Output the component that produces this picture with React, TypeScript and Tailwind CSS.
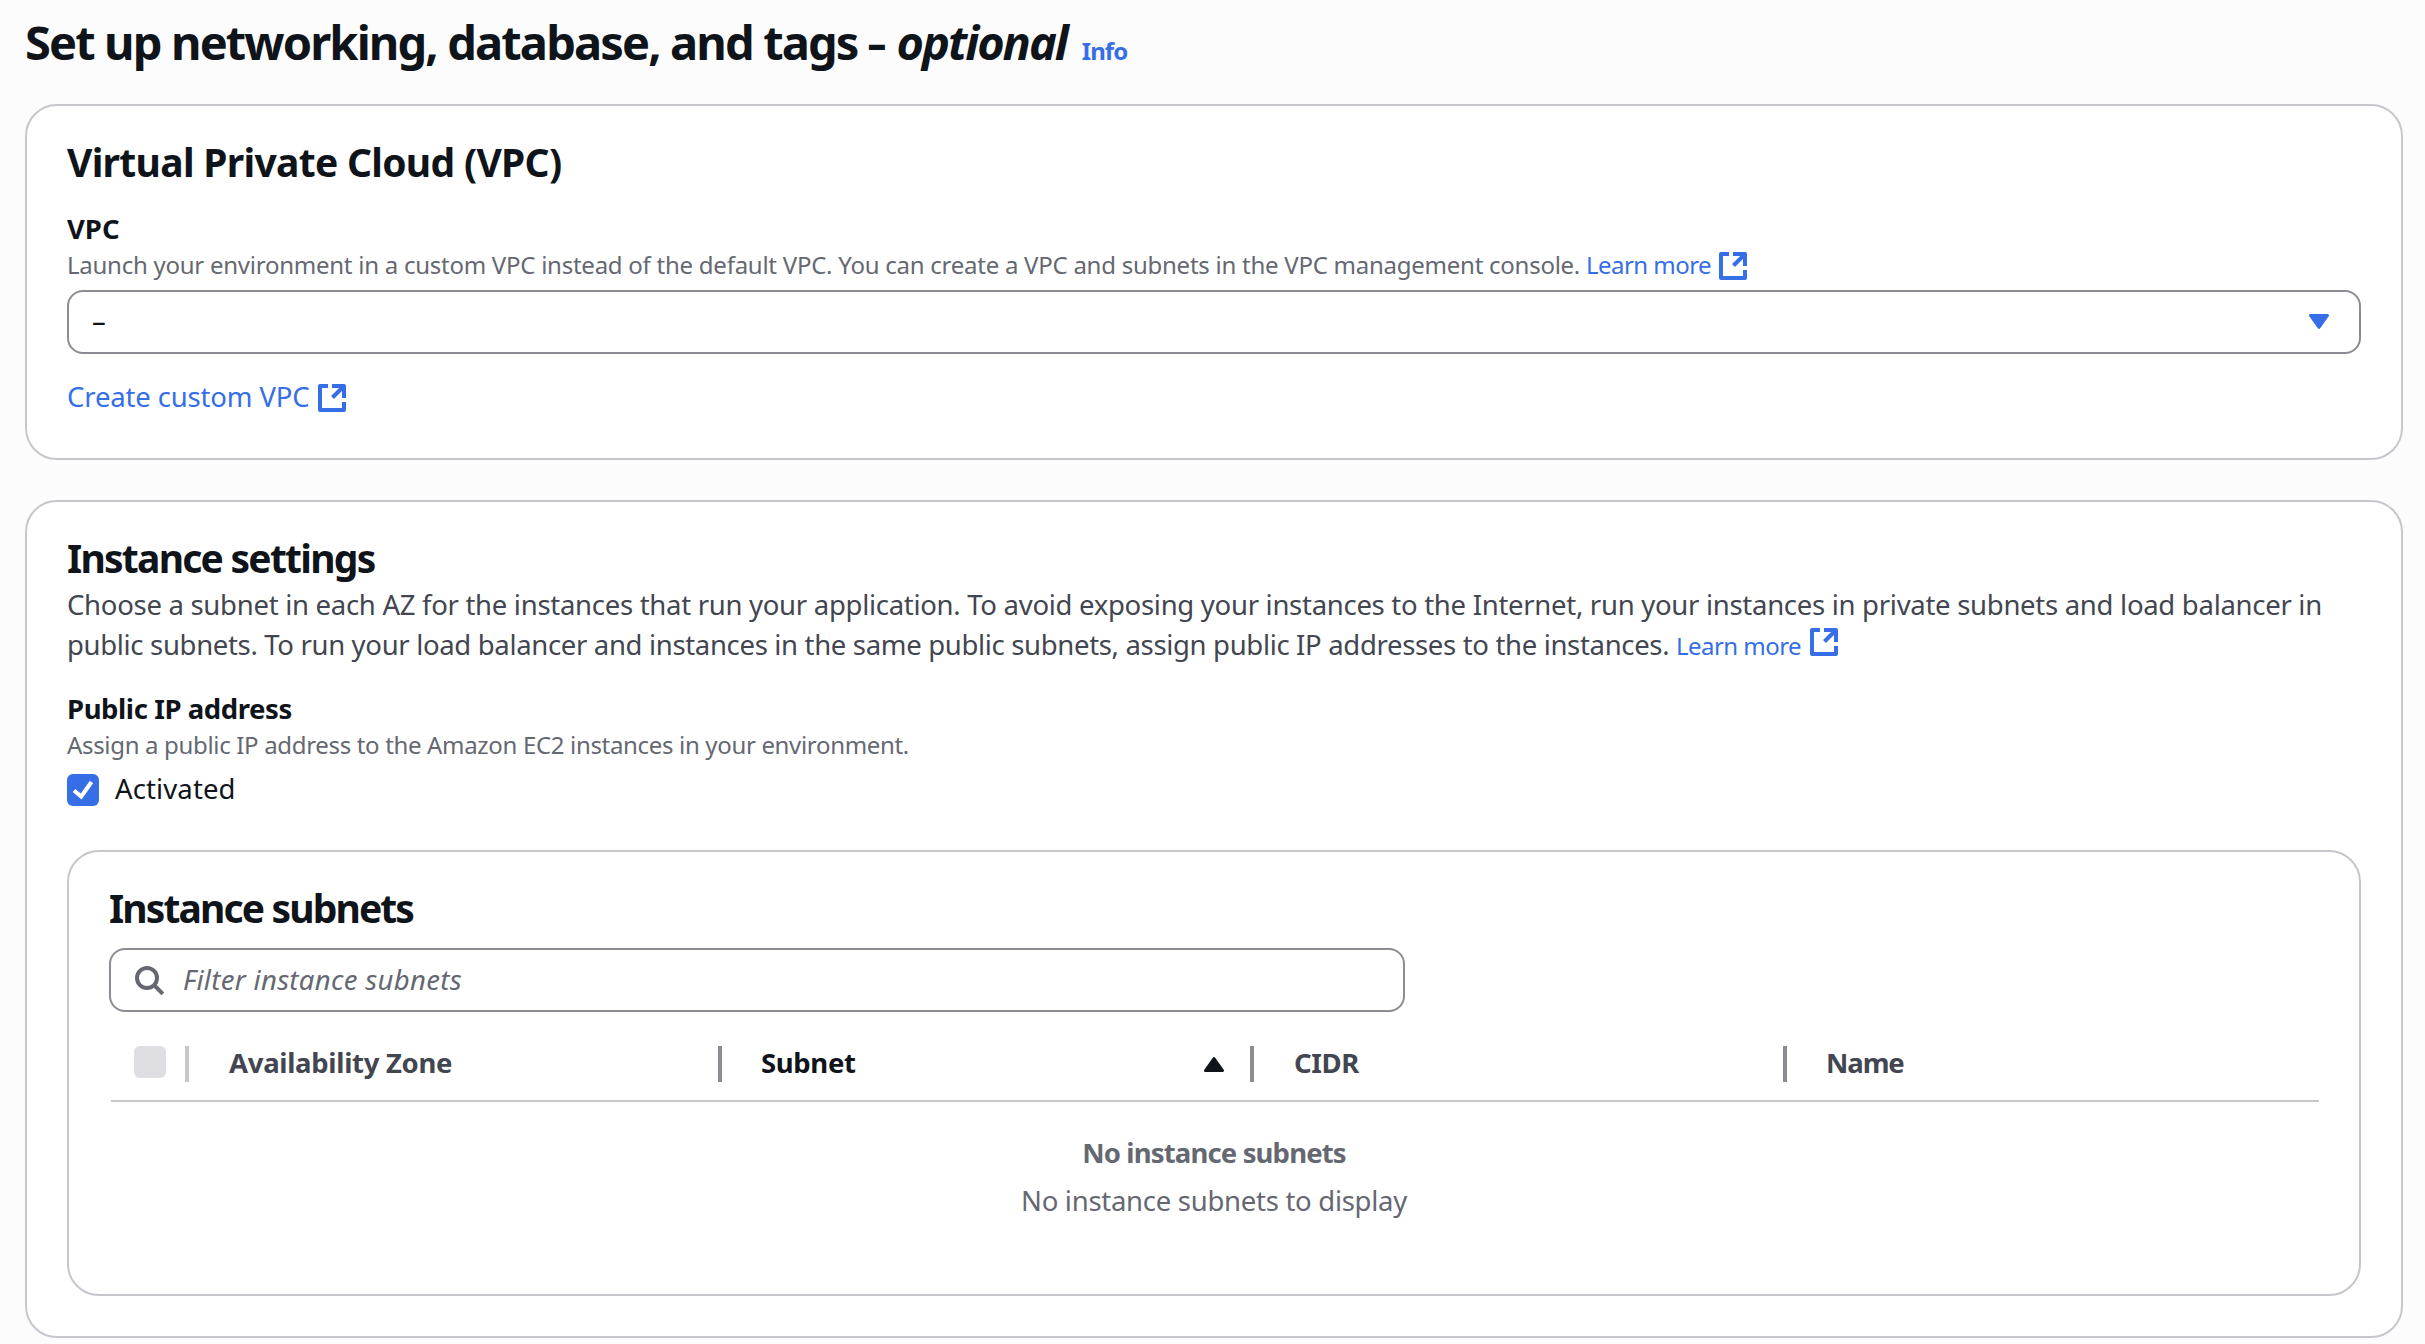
import type { ReactNode } from 'react';

function ExternalIcon({ className }: { className: string }) {
  return (
    <svg
      viewBox="0 0 28 28"
      className={`inline-block h-7 w-7 ${className}`}
      fill="none"
      stroke="currentColor"
      strokeWidth="4"
      strokeLinejoin="round"
    >
      <path d="M10 2H2v24h24v-8" />
      <path d="M14 2h12v12" />
      <path d="M26 2L14.5 13.5" />
    </svg>
  );
}

function Triangle({ className }: { className: string }) {
  return (
    <svg viewBox="0 0 20 16" className={`h-4 w-5 shrink-0 ${className}`} fill="currentColor" stroke="currentColor" strokeWidth="3" strokeLinejoin="round">
      <path d="M1.5 1.5h17L10 13.4z" />
    </svg>
  );
}

function Card({ className, children }: { className: string; children: ReactNode }) {
  return (
    <section className={`flex flex-col rounded-[32px] border-2 border-[#c6c6cd] bg-white px-10 pt-8 ${className}`}>
      {children}
    </section>
  );
}

function Heading({ className, children }: { className: string; children: ReactNode }) {
  return <h2 className={`text-[39px] leading-[48px] font-bold ${className}`}>{children}</h2>;
}

function Column({ className, children }: { className: string; children: ReactNode }) {
  return (
    <div role="columnheader" className={`flex h-10 items-end justify-between text-[27.5px] leading-[38px] font-bold whitespace-nowrap ${className}`}>
      {children}
    </div>
  );
}

function Divider({ className }: { className: string }) {
  return <span className={`h-9 w-1 shrink-0 ${className}`} />;
}

export default function App() {
  return (
    <main className="h-[1344px] w-[2425px] overflow-hidden bg-[#fcfcfd] pt-3 pl-[25px] font-['Noto_Sans',sans-serif] text-[#0f141a]">
      <header className="flex h-[60px] items-baseline text-[47px] leading-[60px] font-bold whitespace-nowrap">
        <h1 className="tracking-[-1.87px]">Set up networking, database, and tags</h1>
        <span className="ml-[7px] w-6 scale-x-80 text-center">–</span>
        <em className="ml-2 tracking-[-2.05px]">optional</em>
        <a className="ml-[15px] text-[24px] tracking-[-0.9px] text-[#356ee6]">Info</a>
      </header>

      <Card className="mt-8 h-[356px] w-[2378px]">
        <Heading className="tracking-[-0.7px]">Virtual Private Cloud (VPC)</Heading>
        <label className="mt-[23px] text-[27.5px] leading-10 font-bold">VPC</label>
        <p className="h-8 text-[24px] leading-8 tracking-[-0.253px] whitespace-nowrap text-[#656871]">
          Launch your environment in a custom VPC instead of the default VPC. You can create a VPC and subnets in the VPC
          management console.{' '}
          <a className="tracking-[-0.55px] text-[#356ee6]">
            Learn more
            <ExternalIcon className="ml-2 align-[-6px]" />
          </a>
        </p>
        <div className="mt-[9px] flex h-16 items-center justify-between rounded-2xl border-2 border-[#8c8c94] pr-[30px] pl-[23px] text-[27.5px] leading-10">
          <span className="mb-0.5">–</span>
          <Triangle className="text-[#356ee6]" />
        </div>
        <a className="mt-[23px] h-10 text-[27.5px] leading-10 tracking-[-0.15px] text-[#356ee6]">
          Create custom VPC
          <ExternalIcon className="ml-[9px] align-[-5px]" />
        </a>
      </Card>

      <Card className="mt-10 h-[838px] w-[2378px]">
        <Heading className="tracking-[-1.75px]">Instance settings</Heading>
        <p className="mt-[3px] h-20 text-[27.5px] leading-10 whitespace-nowrap text-[#424650]">
          <span className="block h-10 tracking-[-0.286px]">
            Choose a subnet in each AZ for the instances that run your application. To avoid exposing your instances to the
            Internet, run your instances in private subnets and load balancer in
          </span>
          <span className="block h-10 tracking-[-0.33px]">
            public subnets. To run your load balancer and instances in the same public subnets, assign public IP addresses to
            the instances.{' '}
            <a className="text-[24px] tracking-[-0.55px] text-[#356ee6]">
              Learn more
              <ExternalIcon className="ml-[9px] align-[-1px]" />
            </a>
          </span>
        </p>
        <h3 className="mt-6 text-[27.5px] leading-10 font-bold tracking-[-0.42px]">Public IP address</h3>
        <p className="text-[24px] leading-8 tracking-[-0.33px] text-[#656871]">
          Assign a public IP address to the Amazon EC2 instances in your environment.
        </p>
        <label className="mt-[7px] flex h-10 gap-4 text-[27.5px] leading-[42px] tracking-[0.12px]">
          <span className="mt-1.5 h-8 w-8 rounded-md bg-[#356ee6]">
            <svg viewBox="0 0 32 32" className="h-8 w-8" fill="none" stroke="white" strokeWidth="4">
              <path d="M7 16.5l7.2 6L24.5 8" />
            </svg>
          </span>
          Activated
        </label>

        <Card className="mt-[42px] h-[446px]">
          <Heading className="tracking-[-1.87px]">Instance subnets</Heading>
          <div className="mt-4 flex h-16 w-[1296px] items-center rounded-2xl border-2 border-[#8c8c94] pl-[22px]">
            <svg viewBox="0 0 32 32" className="h-8 w-8" fill="none" stroke="#656871" strokeWidth="4">
              <circle cx="14" cy="14" r="10" />
              <path d="M21 21l8.8 8.8" />
            </svg>
            <span className="ml-[18px] text-[27.5px] leading-10 tracking-[0.32px] text-[#656871] italic">
              Filter instance subnets
            </span>
          </div>

          <div role="row" className="mt-[30px] ml-0.5 grid h-[60px] grid-cols-[78px_533px_532px_533px_1fr] border-b-2 border-[#c6c6cd] text-[#424650]">
            <Column className="pl-[23px]">
              <span className="mb-1 h-8 w-8 rounded-md bg-[#dedee3]" />
              <Divider className="bg-[#c6c6cd]" />
            </Column>
            <Column className="pl-10">
              <span className="tracking-[-0.3px]">Availability Zone</span>
              <Divider className="bg-[#8c8c94]" />
            </Column>
            <Column className="pl-[39px] text-[#0f141a]">
              <span className="tracking-[-0.35px]">Subnet</span>
              <span className="flex items-end gap-[26px]">
                <Triangle className="mb-2.5 rotate-180" />
                <Divider className="bg-[#8c8c94]" />
              </span>
            </Column>
            <Column className="pl-10">
              <span className="tracking-[-0.4px]">CIDR</span>
              <Divider className="bg-[#8c8c94]" />
            </Column>
            <Column className="pl-[39px]">
              <span className="tracking-[-1.1px]">Name</span>
            </Column>
          </div>

          <div className="mt-[31px] flex flex-col items-center gap-2 text-[27.5px] leading-10 text-[#656871]">
            <strong className="font-bold tracking-[-0.85px]">No instance subnets</strong>
            <p className="tracking-[-0.28px]">No instance subnets to display</p>
          </div>
        </Card>
      </Card>
    </main>
  );
}
